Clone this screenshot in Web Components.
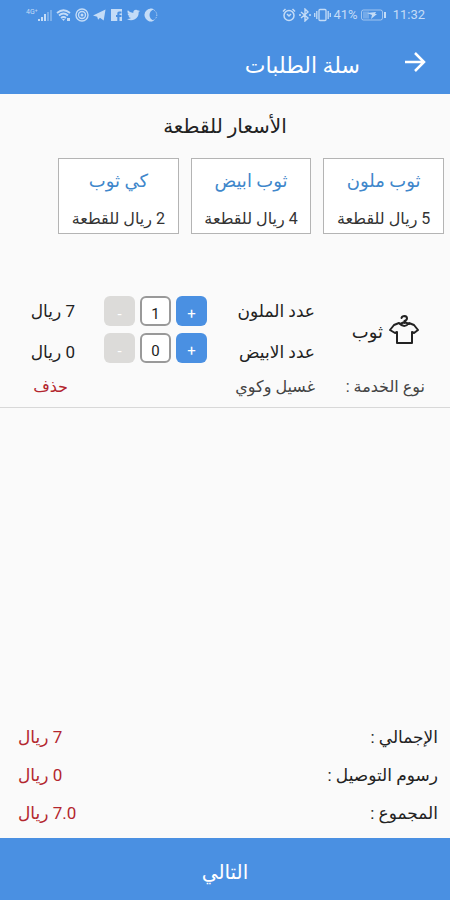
<!DOCTYPE html>
<html lang="ar" dir="rtl">
<head>
<meta charset="utf-8">
<meta name="viewport" content="width=device-width, initial-scale=1">
<title>سلة الطلبات</title>
<style>
  body {
    margin: 0;
    background: #fafafa;
    color: #222;
    font-family: Roboto, "DejaVu Sans", sans-serif;
    --blue: #4a90e2;
    --red: #b3262e;
  }
</style>
</head>
<body>
<basket-page>
  <status-bar slot="top"></status-bar>
  <app-header slot="top">سلة الطلبات</app-header>
  <price-list heading="الأسعار للقطعة">
    <price-card name="ثوب ملون">5 ريال للقطعة</price-card>
    <price-card name="ثوب ابيض">4 ريال للقطعة</price-card>
    <price-card name="كي ثوب">2 ريال للقطعة</price-card>
  </price-list>
  <order-item></order-item>
  <total-row slot="totals" label="الإجمالي :">7 ريال</total-row>
  <total-row slot="totals" label="رسوم التوصيل :">0 ريال</total-row>
  <total-row slot="totals" label="المجموع :">7.0 ريال</total-row>
  <next-button slot="action">التالي</next-button>
</basket-page>

<script>
const define = (name, html, setup) => customElements.define(name, class extends HTMLElement {
  constructor() {
    super();
    const t = document.createElement('template');
    t.innerHTML = html;
    this.attachShadow({ mode: 'open' }).append(t.content.cloneNode(true));
  }
  connectedCallback() { if (setup) setup(this, this.shadowRoot); }
});

define('basket-page', `
  <style>
    :host { display: flex; flex-direction: column; min-height: 100vh; }
    main { flex: 1; }
    .totals { padding: 0 12px 6px 18px; }
  </style>
  <slot name="top"></slot>
  <main><slot></slot></main>
  <section class="totals"><slot name="totals"></slot></section>
  <slot name="action"></slot>`);

define('status-bar', `
  <style>
    :host { display: flex; direction: ltr; justify-content: space-between; align-items: center;
      height: 30px; padding: 0 25px 0 26px; background: var(--blue); color: #c4dcf7; font-size: 13px; line-height: 16px; }
    div { display: flex; align-items: center; gap: 4px; }
    .right { gap: 2px; }
    svg { display: block; flex: none; fill: none; stroke: currentColor; }
    .f { fill: currentColor; stroke: none; }
    .net { font-size: 7px; line-height: 8px; align-self: flex-start; }
    .signal { display: flex; gap: 0; }
    time { margin-left: 4px; }
  </style>
  <div>
    <span class="signal"><span class="net">4G⁺</span>
      <svg width="14" height="14" viewBox="0 0 14 14"><path class="f" d="M0 11h2v2H0zM3 9h2v4H3zM6 6h2v7H6z"/><path class="f" opacity=".4" d="M9 4h2v9H9zM12 2h2v11h-2z"/></svg></span>
    <svg width="15" height="14" viewBox="0 0 15 14" stroke-width="1.800"><path d="M1 5Q7.500-.5 14 5M3 7.500q4.500-4 9 0M5 10q2.500-2 5 0"/><path class="f" d="M6 11h3l-1.500 2zM11 10h3v3h-3z"/></svg>
    <svg width="14" height="14" viewBox="0 0 14 14" stroke-width="1.400"><circle cx="7" cy="7" r="6"/><circle cx="7" cy="7" r="3.500"/><circle class="f" cx="7" cy="7" r="1.500"/></svg>
    <svg width="13" height="14" viewBox="0 0 14 14"><path class="f" d="M0 7.500 13.500 1l-2 12-4-3-2 2-1-3z"/></svg>
    <svg width="13" height="14" viewBox="0 0 13 14"><path class="f" fill-rule="evenodd" d="M1 1h11v12H9.500V9h2V7h-2V5.500h2v-2H9Q7.300 3.500 7.300 5.300V7H6v2h1.300v4H1z"/></svg>
    <svg width="13" height="14" viewBox="0 0 24 24"><path class="f" d="M24 4.600c-.9.400-1.800.7-2.800.8a4.900 4.900 0 0 0 2.100-2.700c-1 .6-2 1-3.100 1.200a4.900 4.900 0 0 0-8.400 4.500A14 14 0 0 1 1.700 3.100a4.900 4.900 0 0 0 1.500 6.600c-.8 0-1.500-.2-2.200-.6a4.900 4.900 0 0 0 3.900 4.900c-.7.200-1.400.2-2.200.1a4.900 4.900 0 0 0 4.600 3.400A9.900 9.900 0 0 1 0 19.500 14 14 0 0 0 21.500 7.100c1-.7 1.800-1.500 2.500-2.500z"/></svg>
    <svg width="14" height="14" viewBox="0 0 14 14"><circle cx="7" cy="7" r="5.800" stroke-dasharray="1 1"/><path class="f" d="M7 .5a6.500 6.500 0 1 0 3 12.300Q5.500 11 5.500 7T10 1.200Q8.600.5 7 .5z"/></svg>
  </div>
  <div class="right">
    <svg width="14" height="14" viewBox="0 0 14 14" stroke-width="1.500"><circle cx="7" cy="7.500" r="5"/><path d="M1 3.500 3.500 1M13 3.500 10.500 1M5 6l2 2 2-2"/></svg>
    <svg width="14" height="14" viewBox="0 0 14 14" stroke-width="1.400"><path d="M3 4l7 6-3 3V1l3 3-7 6M1 7h2M11 7h2"/></svg>
    <svg width="17" height="14" viewBox="0 0 17 14" stroke-width="1.300"><rect x="5" y="1.500" width="7" height="11" rx="1"/><path d="M2.800 3v8M.7 5v4M14.200 3v8M16.300 5v4"/></svg>
    <span>41%</span>
    <svg width="27" height="12" viewBox="0 0 27 12"><rect x="1.500" y="1" width="21" height="10" rx="2" opacity=".7"/><path class="f" opacity=".35" d="M3 2.500h6v7H3z"/><path class="f" d="m7 4 9-1-1 2h2l-6 5 1-4zM24 3h2v6h-2z"/></svg>
    <time>11:32</time>
  </div>`);

define('app-header', `
  <style>
    :host { display: flex; align-items: center; gap: 44px; height: 64px; padding: 0 24px; background: var(--blue); color: #fff; box-sizing: border-box; }
    h1 { margin: 0; font-size: 22px; line-height: 28px; font-weight: 400; padding-top: 8px; }
    button { border: 0; padding: 0; background: none; color: inherit; display: block; }
    svg { display: block; fill: none; stroke: currentColor; stroke-width: 2.500; }
  </style>
  <button type="button" aria-label="رجوع"><svg width="22" height="22" viewBox="0 0 22 22"><path d="M1 11h19M11 2l9 9-9 9"/></svg></button>
  <h1><slot></slot></h1>`);

define('price-list', `
  <style>
    :host { display: block; padding: 20px 6px 0 58px; }
    h2 { margin: 0 0 20px -52px; font-size: 20px; line-height: 24px; font-weight: 400; text-align: center; }
    div { display: grid; grid-template-columns: repeat(3, 1fr); gap: 12px; }
  </style>
  <h2></h2><div><slot></slot></div>`,
  (el, root) => { root.querySelector('h2').textContent = el.getAttribute('heading'); });

define('price-card', `
  <style>
    :host { display: block; background: #fff; border: 1px solid #b4b4b4; text-align: center; padding: 8px 0 2px; color: #333; white-space: nowrap; }
    h3 { margin: 0 0 12px; font-size: 18px; line-height: 28px; font-weight: 400; color: #3f87cb; }
    p { margin: 0; font-size: 16px; line-height: 24px; }
  </style>
  <h3></h3><p><slot></slot></p>`,
  (el, root) => { root.querySelector('h3').textContent = el.getAttribute('name'); });

define('order-item', `
  <style>
    :host { display: grid; grid-template-columns: 110fr 108fr 132fr 75fr; padding: 62px 25px 8px 0; border-bottom: 1px solid #d8d8d8; white-space: nowrap; font-size: 17px; line-height: 24px; }
    .name { display: flex; align-items: center; gap: 6px; padding: 0 6px 0 0; font-size: 18px; }
    .name span { padding-top: 4px; }
    .lines { display: grid; gap: 17px; padding-top: 3px; align-content: start; }
    .steppers { display: grid; gap: 7px; align-content: start; }
    .stepper { display: flex; gap: 5px; }
    button, input { box-sizing: border-box; width: 31px; height: 30px; border: 0; border-radius: 6px; padding: 5px 0 0; text-align: center; font: inherit; font-size: 15px; color: #fff; }
    .plus { background: var(--blue); }
    .minus { background: #dcdbd9; }
    input { background: #fff; border: 2px solid #999; color: #222; }
    .small { font-size: 16px; padding-top: 11px; color: #444; }
    .delete { color: var(--red); text-decoration: none; padding-right: 7px; }
    svg { display: block; flex: none; }
  </style>
  <div class="name">
    <svg width="30" height="30" viewBox="0 0 30 30" fill="none" stroke="#222" stroke-width="2" stroke-linejoin="round" stroke-linecap="round"><path d="M10 8 5 10l-4 5 5 3 2-1v11h15V17l2 1 4-3-4-5-5-2M10 8q5.500 6 10 0M12.500 3q.5-2 3-2 2.500.3 2.500 2.300T15.500 6v2M11 9l4.500-2L20 9"/></svg>
    <span>ثوب</span>
  </div>
  <div class="lines"><label for="coloured">عدد الملون</label><label for="white">عدد الابيض</label></div>
  <div class="steppers">
    <div class="stepper"><button class="plus" type="button">+</button><input id="coloured" inputmode="numeric" value="1"><button class="minus" type="button">-</button></div>
    <div class="stepper"><button class="plus" type="button">+</button><input id="white" inputmode="numeric" value="0"><button class="minus" type="button">-</button></div>
  </div>
  <div class="lines"><span>7 ريال</span><span>0 ريال</span></div>
  <span class="small">نوع الخدمة :</span>
  <span class="small">غسيل وكوي</span>
  <span></span>
  <span class="small"><a class="delete" href="#">حذف</a></span>`,
  (el, root) => {
    root.querySelectorAll('.stepper').forEach(s => {
      const input = s.querySelector('input');
      s.querySelector('.plus').onclick = () => { input.value = +input.value + 1; };
      s.querySelector('.minus').onclick = () => { input.value = Math.max(0, input.value - 1); };
    });
  });

define('total-row', `
  <style>
    :host { display: flex; justify-content: space-between; align-items: center; height: 38px; font-size: 17px; line-height: 24px; }
    strong { font-weight: 400; color: var(--red); }
  </style>
  <span></span><strong><slot></slot></strong>`,
  (el, root) => { root.querySelector('span').textContent = el.getAttribute('label'); });

define('next-button', `
  <style>
    :host { display: block; }
    button { display: block; width: 100%; border: 0; background: var(--blue); color: #fff; font: inherit; font-size: 20px; line-height: 28px; padding: 20px 0 14px; }
  </style>
  <button type="button"><slot></slot></button>`);
</script>
</body>
</html>
